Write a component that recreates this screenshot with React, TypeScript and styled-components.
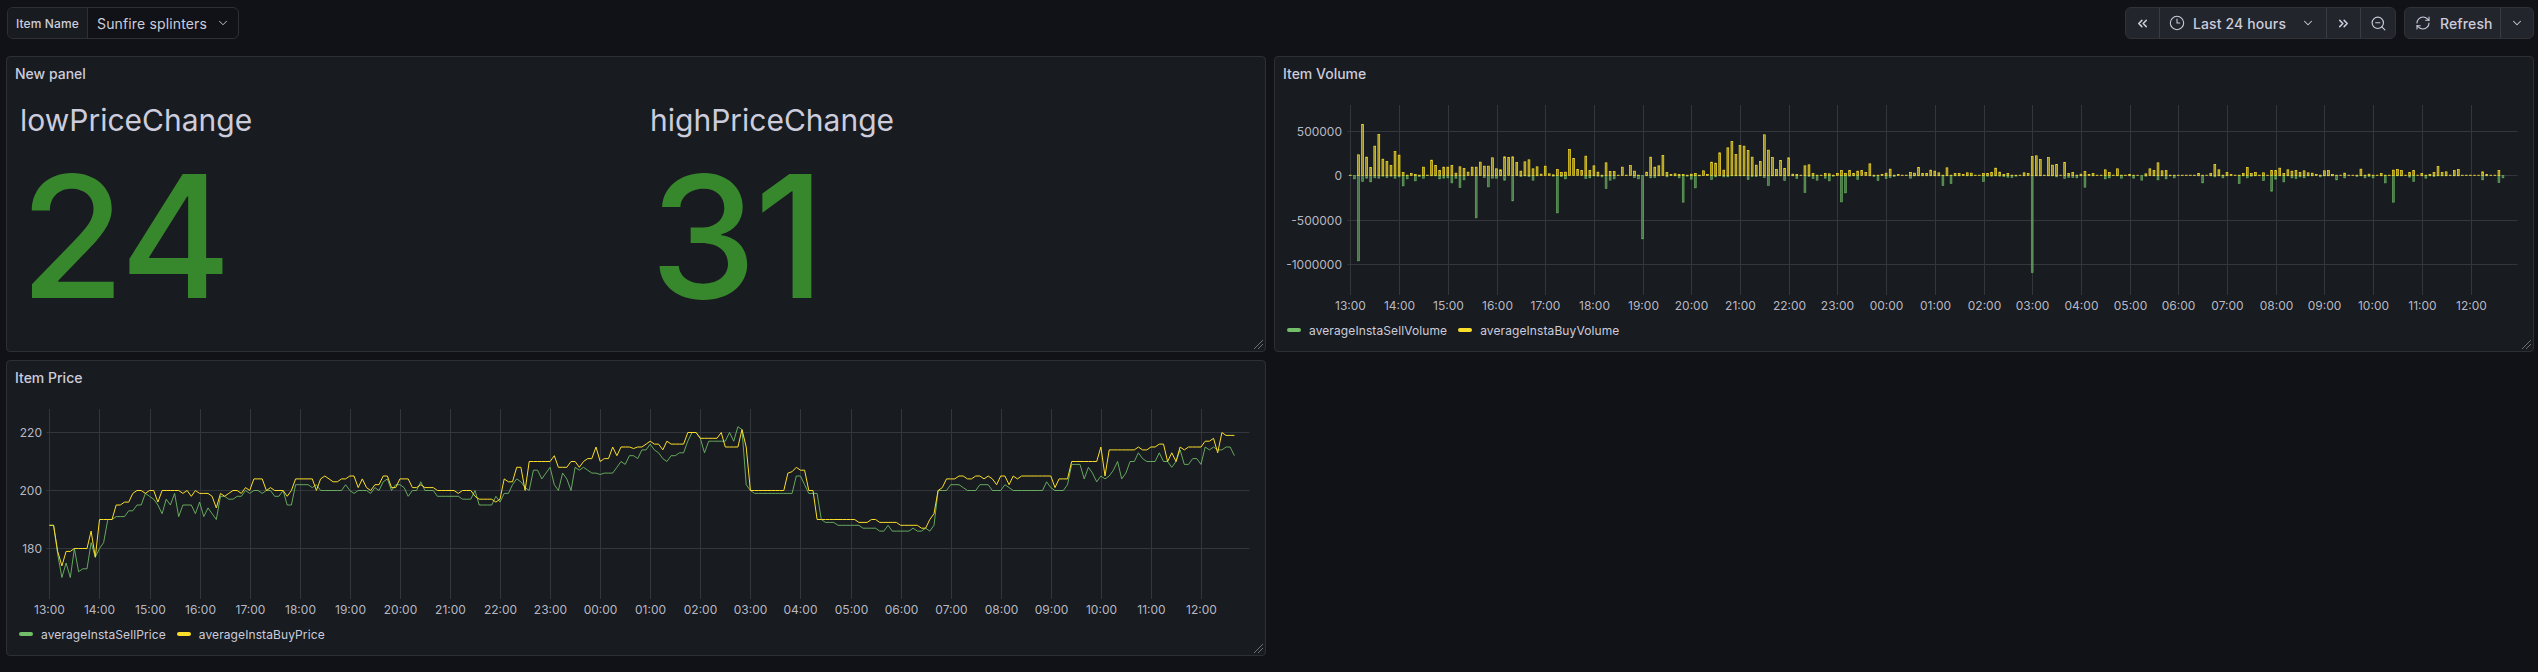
import { ChevronDown, ChevronsLeft, ChevronsRight, Clock3, RefreshCw, ZoomOut } from "lucide-react";
import styled, { createGlobalStyle } from "styled-components";

const GlobalStyle = createGlobalStyle`
	html, body {
		margin: 0;
		padding: 0;
		background: #111217;
	}

	body {
		width: 2538px;
		height: 672px;
		overflow: hidden;
		color: #ccccdc;
		font-family: Inter, "Liberation Sans", sans-serif;
	}

	* {
		box-sizing: border-box;
	}
`;

const Toolbar = styled.header`
	display: flex;
	justify-content: space-between;
	height: 32px;
	margin: 7px 4px 17px 7px;
`;

const VariablePicker = styled.div`
	display: flex;
	width: 232px;
	border: 1px solid #2d2f34;
	border-radius: 6px;
`;

const VariableLabel = styled.label`
	display: flex;
	align-items: center;
	width: 80px;
	padding-left: 8px;
	background: #181b1f;
	border-right: 1px solid #2d2f34;
	border-radius: 6px 0 0 6px;
	font-size: 12px;
	font-weight: 500;
	letter-spacing: 0.1px;
`;

const VariableValue = styled.div`
	display: flex;
	align-items: center;
	flex: 1;
	padding-left: 9px;
	column-gap: 9px;
	font-size: 14px;
	letter-spacing: 0.15px;
`;

const ToolbarActions = styled.div`
	display: flex;
	column-gap: 8px;
`;

const ButtonGroup = styled.div`
	display: flex;
	background: #22252b;
	border: 1px solid #303237;
	border-radius: 6px;
`;

const ToolButton = styled.button<{ $width: number; $pad?: number; $gap?: number }>`
	display: flex;
	align-items: center;
	justify-content: ${(p) => (p.$pad === undefined ? "center" : "flex-start")};
	width: ${(p) => p.$width}px;
	padding: 0 0 0 ${(p) => p.$pad ?? 0}px;
	column-gap: ${(p) => p.$gap ?? 0}px;
	background: none;
	border: 0;
	color: #ccccdc;
	font-family: inherit;
	font-size: 14px;
	font-weight: 500;
	letter-spacing: 0.12px;
	white-space: nowrap;

	& + & {
		border-left: 1px solid #3a3c41;
	}
`;

const Dashboard = styled.main`
	display: grid;
	grid-template-columns: 1260px 1260px;
	grid-auto-rows: 296px;
	gap: 8px;
	margin-left: 6px;
`;

const Panel = styled.section`
	position: relative;
	background: #181b1f;
	border: 1px solid #2d2f34;
	border-radius: 4px;
`;

const PanelTitle = styled.h2`
	height: 39px;
	margin: 0;
	padding: 7px 0 0 8px;
	font-size: 14px;
	font-weight: 500;
	line-height: 20px;
`;

const ResizeHandle = styled.svg`
	position: absolute;
	right: 1px;
	bottom: 1px;
	width: 11px;
	height: 11px;
`;

const StatRow = styled.div`
	display: flex;
	padding-left: 13px;
`;

const Stat = styled.div`
	flex: none;
	width: 630px;
`;

const StatName = styled.div`
	height: 44px;
	margin-top: 2px;
	font-size: 30px;
	line-height: 44px;
`;

const StatValue = styled.div`
	margin-top: 9px;
	color: #37872d;
	font-size: 170px;
	font-weight: 500;
	line-height: 170px;
	letter-spacing: -2px;
`;

const ChartFrame = styled.svg`
	display: block;
	width: 1258px;
	height: 224px;
`;

const AxisLabel = styled.text`
	fill: #ccccdc;
	fill-opacity: 0.9;
	font-size: 12px;
	dominant-baseline: central;
`;

const Legend = styled.div`
	display: flex;
	align-items: center;
	column-gap: 11px;
	height: 20px;
	padding-left: 12px;
`;

const LegendItem = styled.div`
	display: flex;
	align-items: center;
	column-gap: 8px;
	font-size: 12px;
	letter-spacing: 0.1px;
`;

const LegendDash = styled.i<{ $color: string }>`
	width: 14px;
	height: 4px;
	border-radius: 2px;
	background: ${(p) => p.$color};
`;

const GREEN = "#73bf69";
const YELLOW = "#fade2a";
const HOURS = ["13:00", "14:00", "15:00", "16:00", "17:00", "18:00", "19:00", "20:00", "21:00", "22:00", "23:00", "00:00", "01:00", "02:00", "03:00", "04:00", "05:00", "06:00", "07:00", "08:00", "09:00", "10:00", "11:00", "12:00"];

// bar heights, in thirds of a pixel
const buyVolume = [
	1, 0, 62, 153, 55, 24, 88, 123, 49, 42, 30, 72, 61, 9, 1, 6, 3, 1, 25, 1, 46, 30, 15, 25, 25, 30, 7, 26, 21, 10,
	25, 25, 40, 28, 28, 53, 20, 17, 56, 54, 56, 39, 13, 41, 47, 20, 26, 4, 28, 5, 2, 18, 9, 10, 78, 51, 18, 15, 58, 15,
	29, 10, 1, 38, 12, 12, 1, 25, 1, 30, 13, 1, 0, 10, 55, 25, 29, 60, 9, 3, 5, 3, 3, 1, 4, 6, 1, 14, 3, 40,
	37, 68, 16, 83, 102, 63, 90, 88, 75, 55, 31, 42, 122, 76, 54, 18, 45, 21, 53, 4, 3, 1, 29, 32, 6, 1, 1, 6, 5, 1,
	6, 15, 6, 15, 6, 13, 15, 9, 35, 1, 1, 3, 7, 19, 1, 3, 1, 1, 9, 7, 24, 6, 6, 16, 13, 8, 1, 23, 1, 6,
	6, 3, 8, 7, 1, 1, 6, 6, 9, 22, 10, 3, 6, 1, 1, 1, 8, 6, 57, 59, 48, 1, 54, 31, 33, 1, 39, 6, 9, 1,
	4, 12, 3, 6, 1, 1, 17, 9, 1, 20, 1, 1, 3, 1, 1, 0, 5, 20, 15, 38, 14, 15, 1, 1, 1, 1, 1, 1, 1, 6,
	1, 1, 6, 33, 17, 1, 9, 3, 1, 1, 6, 24, 6, 9, 1, 8, 1, 15, 15, 22, 6, 17, 13, 15, 9, 14, 8, 7, 3, 1,
	14, 15, 3, 1, 1, 7, 1, 1, 1, 19, 1, 4, 1, 1, 6, 1, 1, 16, 18, 15, 1, 9, 15, 1, 6, 1, 3, 9, 27, 9,
	11, 1, 15, 18, 1, 1, 1, 1, 1, 11, 3, 1, 1, 15, 0,
];

const sellVolume = [
	0, 10, 256, 18, 8, 19, 7, 8, 2, 6, 2, 8, 4, 31, 10, 0, 16, 3, 8, 0, 1, 1, 10, 8, 7, 22, 8, 36, 13, 0,
	0, 127, 0, 6, 34, 8, 8, 1, 14, 0, 76, 0, 3, 1, 3, 14, 1, 0, 0, 0, 2, 112, 3, 10, 0, 0, 0, 0, 9, 7,
	1, 2, 4, 39, 14, 10, 0, 0, 0, 0, 6, 10, 190, 1, 7, 6, 1, 0, 4, 0, 1, 7, 80, 2, 11, 37, 1, 0, 0, 12,
	4, 1, 4, 4, 1, 1, 1, 1, 12, 3, 3, 1, 6, 30, 1, 1, 1, 15, 1, 1, 9, 0, 51, 3, 9, 14, 0, 8, 16, 2,
	0, 79, 52, 2, 1, 12, 0, 0, 1, 3, 15, 0, 9, 6, 3, 0, 0, 0, 8, 1, 1, 1, 1, 1, 1, 1, 30, 1, 24, 1,
	1, 0, 1, 1, 0, 0, 18, 2, 2, 1, 2, 3, 5, 6, 2, 0, 1, 0, 291, 1, 1, 0, 1, 1, 4, 0, 9, 6, 6, 7,
	1, 35, 0, 1, 0, 0, 10, 7, 0, 1, 8, 0, 1, 8, 0, 14, 2, 0, 1, 13, 1, 10, 1, 7, 0, 0, 0, 0, 0, 1,
	22, 0, 1, 4, 1, 7, 1, 0, 0, 24, 1, 7, 2, 1, 0, 15, 0, 47, 11, 1, 19, 1, 7, 9, 4, 7, 1, 1, 0, 4,
	1, 1, 1, 13, 0, 7, 0, 0, 3, 1, 7, 3, 7, 0, 1, 22, 0, 80, 1, 1, 0, 5, 18, 0, 1, 8, 1, 3, 1, 1,
	1, 0, 1, 1, 0, 0, 0, 0, 0, 13, 1, 0, 0, 21, 7,
];

const buyPrice = [
	188, 188, 179, 174, 179, 179, 180, 180, 180, 180, 186, 177, 190, 190, 190, 190, 195, 195, 196, 196, 199, 200, 200, 199, 200, 200, 196, 200, 200, 200,
	200, 200, 199, 200, 198, 200, 199, 199, 199, 198, 194, 199, 198, 199, 200, 200, 199, 201, 200, 204, 204, 204, 200, 201, 200, 200, 200, 198, 200, 204,
	204, 204, 204, 204, 200, 204, 205, 204, 203, 203, 204, 204, 205, 205, 201, 204, 201, 200, 202, 202, 205, 205, 201, 201, 204, 204, 204, 201, 201, 202,
	201, 201, 201, 200, 200, 200, 200, 200, 199, 200, 200, 200, 198, 197, 197, 197, 197, 196, 197, 204, 203, 203, 208, 208, 200, 210, 210, 210, 210, 210,
	210, 212, 208, 208, 208, 210, 210, 208, 210, 211, 211, 215, 210, 211, 211, 215, 212, 215, 215, 215, 214.5, 215, 215, 216, 217, 216, 216, 214, 217, 216,
	216, 216, 216, 220, 220, 220, 218, 218, 218, 218, 218, 220, 215, 215, 215, 215, 221, 215, 200, 200, 200, 200, 200, 200, 200, 200, 200, 206, 206.5, 208,
	207, 207, 200, 200, 190, 190, 190, 190, 190, 190, 190, 190, 190, 190, 189, 189, 189, 190, 190, 189, 189, 189, 189, 189, 188, 188, 188, 188, 188, 187,
	187, 190, 192, 200, 201, 204, 204, 204, 205, 205, 204, 204, 205, 205, 204, 205, 204, 202, 205, 205, 202, 205, 204, 205, 205, 205, 205, 205, 205, 205,
	205, 201, 204, 204, 204, 210, 210, 210, 210, 210, 210, 210, 215, 205, 214, 214, 214, 214, 214, 214, 214, 215, 214, 214, 215, 215, 216, 216, 210, 213,
	210, 215, 214, 215, 215, 215, 215, 217, 217, 218, 213, 220, 219, 219, 219,
];

const sellPrice = [
	188, 188, 178, 170, 175, 170, 180, 172, 173, 173, 182, 177, 180, 182, 190, 190, 191, 191, 191, 193, 193, 195, 195, 199, 198, 197, 195, 192, 197, 195,
	199, 191, 195, 195, 195, 192, 196, 191, 194, 192, 190, 198, 198, 197, 197, 198, 198, 200, 199, 200, 200, 199, 200, 200, 198, 198, 200, 195, 195, 202,
	202, 202, 202, 201, 202, 200, 200, 200, 200, 200, 200, 202, 200, 199, 200, 200, 200, 199, 201, 200, 203, 204, 200, 202, 202, 201, 198, 200, 200, 203,
	200, 200, 200, 198, 198, 198, 198, 198, 198, 197, 197, 197, 200, 195, 195, 195, 195, 198, 196, 199, 199, 202, 204, 203, 201, 200, 207, 207, 204, 206,
	208, 202, 200, 206, 204, 200, 208, 207, 208, 207, 206, 206, 205.5, 206, 206, 206, 208, 210, 209, 212, 212, 211, 214, 214, 216, 214, 213, 211, 210, 212,
	212, 213, 213, 217, 220, 220, 218, 213, 217, 217, 217, 217, 217, 220, 217, 222, 221, 202, 200, 199, 199, 199, 199, 199, 199, 199, 199, 199, 199, 205,
	205, 202, 199, 199, 199, 190, 189, 189, 189, 188, 188, 188, 188, 188, 188, 187, 187, 187, 187, 186, 186, 188, 186, 186, 186, 186, 186, 187, 186, 186,
	187, 186, 188, 200, 200, 200, 202, 202, 202, 201, 200, 200, 200, 202, 202, 202, 200, 200, 200, 202, 201, 200, 200, 200, 200, 200, 200, 200, 200, 203,
	201, 200, 200, 200, 202, 209, 209, 209, 204, 208, 206, 203, 205, 204, 205, 207, 210, 204, 206, 210, 210, 213, 211, 210, 210, 210, 213, 210, 210, 208,
	210, 214, 209, 209, 211, 211, 209, 215, 214, 215, 214, 214, 215, 215, 212,
];

const crisp = (v: number) => Math.round(v) + 0.5;

const TOP = 9;
const BOTTOM = 199;
const RIGHT = 1242.5;

type Tick = { label: string; y: number };

const ChartGrid = ({ x0, hourWidth, axisRight, ticks }: { x0: number; hourWidth: number; axisRight: number; ticks: Tick[] }) => (
	<g>
		{HOURS.map((h, i) => {
			const x = crisp(x0 + i * hourWidth);
			return (
				<g key={h}>
					<line x1={x} x2={x} y1={TOP} y2={BOTTOM} stroke="#33363b" />
					<AxisLabel x={x} y={209} textAnchor="middle">
						{h}
					</AxisLabel>
				</g>
			);
		})}
		{ticks.map((t) => (
			<g key={t.label}>
				<line x1={x0 - 3} x2={RIGHT} y1={crisp(t.y)} y2={crisp(t.y)} stroke="#33363b" />
				<AxisLabel x={axisRight} y={t.y + 0.5} textAnchor="end">
					{t.label}
				</AxisLabel>
			</g>
		))}
	</g>
);

const VolumeChart = () => {
	const x0 = 75.4;
	const zero = 79.5;
	const step = 48.7 / 12;
	return (
		<ChartFrame viewBox="0 0 1258 224">
			<ChartGrid
				x0={x0}
				hourWidth={48.7}
				axisRight={67}
				ticks={[
					{ label: "500000", y: 35 },
					{ label: "0", y: 79 },
					{ label: "-500000", y: 124 },
					{ label: "-1000000", y: 168 },
				]}
			/>
			{sellVolume.map((h, i) =>
				h > 0 ? (
					<rect key={i} x={x0 + i * step - 0.9} y={zero} width={1.8} height={h / 3} fill={GREEN} fillOpacity={0.55} stroke={GREEN} strokeOpacity={0.8} strokeWidth={0.7} />
				) : null,
			)}
			{buyVolume.map((h, i) =>
				h > 0 ? (
					<rect key={i} x={x0 + i * step - 0.9} y={zero - h / 3} width={1.8} height={h / 3} fill={YELLOW} fillOpacity={0.55} stroke={YELLOW} strokeWidth={0.7} />
				) : null,
			)}
		</ChartFrame>
	);
};

const PriceChart = () => {
	const x0 = 42.4;
	const step = 50.07 / 12;
	const toPoints = (values: number[]) => values.map((v, i) => `${(x0 + i * step).toFixed(1)},${(90.5 - (v - 200) * 2.9).toFixed(1)}`).join(" ");
	return (
		<ChartFrame viewBox="0 0 1258 224">
			<ChartGrid
				x0={x0}
				hourWidth={50.07}
				axisRight={35}
				ticks={[
					{ label: "220", y: 32 },
					{ label: "200", y: 90 },
					{ label: "180", y: 148 },
				]}
			/>
			<polyline points={toPoints(sellPrice)} fill="none" stroke={GREEN} strokeOpacity={0.85} strokeWidth={1} />
			<polyline points={toPoints(buyPrice)} fill="none" stroke={YELLOW} strokeWidth={1} />
		</ChartFrame>
	);
};

const ChartLegend = ({ names }: { names: [string, string] }) => (
	<Legend>
		<LegendItem>
			<LegendDash $color={GREEN} />
			{names[0]}
		</LegendItem>
		<LegendItem>
			<LegendDash $color={YELLOW} />
			{names[1]}
		</LegendItem>
	</Legend>
);

const Handle = () => (
	<ResizeHandle viewBox="0 0 11 11">
		<path d="M1 10 10 1M5 10 10 5" stroke="#6e7076" strokeWidth="1" fill="none" />
	</ResizeHandle>
);

const App = () => {
	return (
		<>
			<GlobalStyle />
			<Toolbar>
				<VariablePicker>
					<VariableLabel>Item Name</VariableLabel>
					<VariableValue>
						Sunfire splinters
						<ChevronDown size={14} strokeWidth={1.6} />
					</VariableValue>
				</VariablePicker>
				<ToolbarActions>
					<ButtonGroup>
						<ToolButton $width={33}>
							<ChevronsLeft size={15} strokeWidth={2.4} />
						</ToolButton>
						<ToolButton $width={167} $pad={9} $gap={8}>
							<Clock3 size={16} strokeWidth={1.6} />
							Last 24 hours
							<ChevronDown size={14} strokeWidth={1.8} style={{ marginLeft: 7 }} />
						</ToolButton>
						<ToolButton $width={34}>
							<ChevronsRight size={15} strokeWidth={2.4} />
						</ToolButton>
						<ToolButton $width={35}>
							<ZoomOut size={17} strokeWidth={1.6} />
						</ToolButton>
					</ButtonGroup>
					<ButtonGroup>
						<ToolButton $width={95} $pad={10} $gap={9}>
							<RefreshCw size={16} strokeWidth={1.6} />
							Refresh
						</ToolButton>
						<ToolButton $width={33}>
							<ChevronDown size={14} strokeWidth={1.8} />
						</ToolButton>
					</ButtonGroup>
				</ToolbarActions>
			</Toolbar>
			<Dashboard>
				<Panel>
					<PanelTitle>New panel</PanelTitle>
					<StatRow>
						<Stat>
							<StatName>lowPriceChange</StatName>
							<StatValue>24</StatValue>
						</Stat>
						<Stat>
							<StatName>highPriceChange</StatName>
							<StatValue>31</StatValue>
						</Stat>
					</StatRow>
					<Handle />
				</Panel>
				<Panel>
					<PanelTitle>Item Volume</PanelTitle>
					<VolumeChart />
					<ChartLegend names={["averageInstaSellVolume", "averageInstaBuyVolume"]} />
					<Handle />
				</Panel>
				<Panel>
					<PanelTitle>Item Price</PanelTitle>
					<PriceChart />
					<ChartLegend names={["averageInstaSellPrice", "averageInstaBuyPrice"]} />
					<Handle />
				</Panel>
			</Dashboard>
		</>
	);
};

export default App;
